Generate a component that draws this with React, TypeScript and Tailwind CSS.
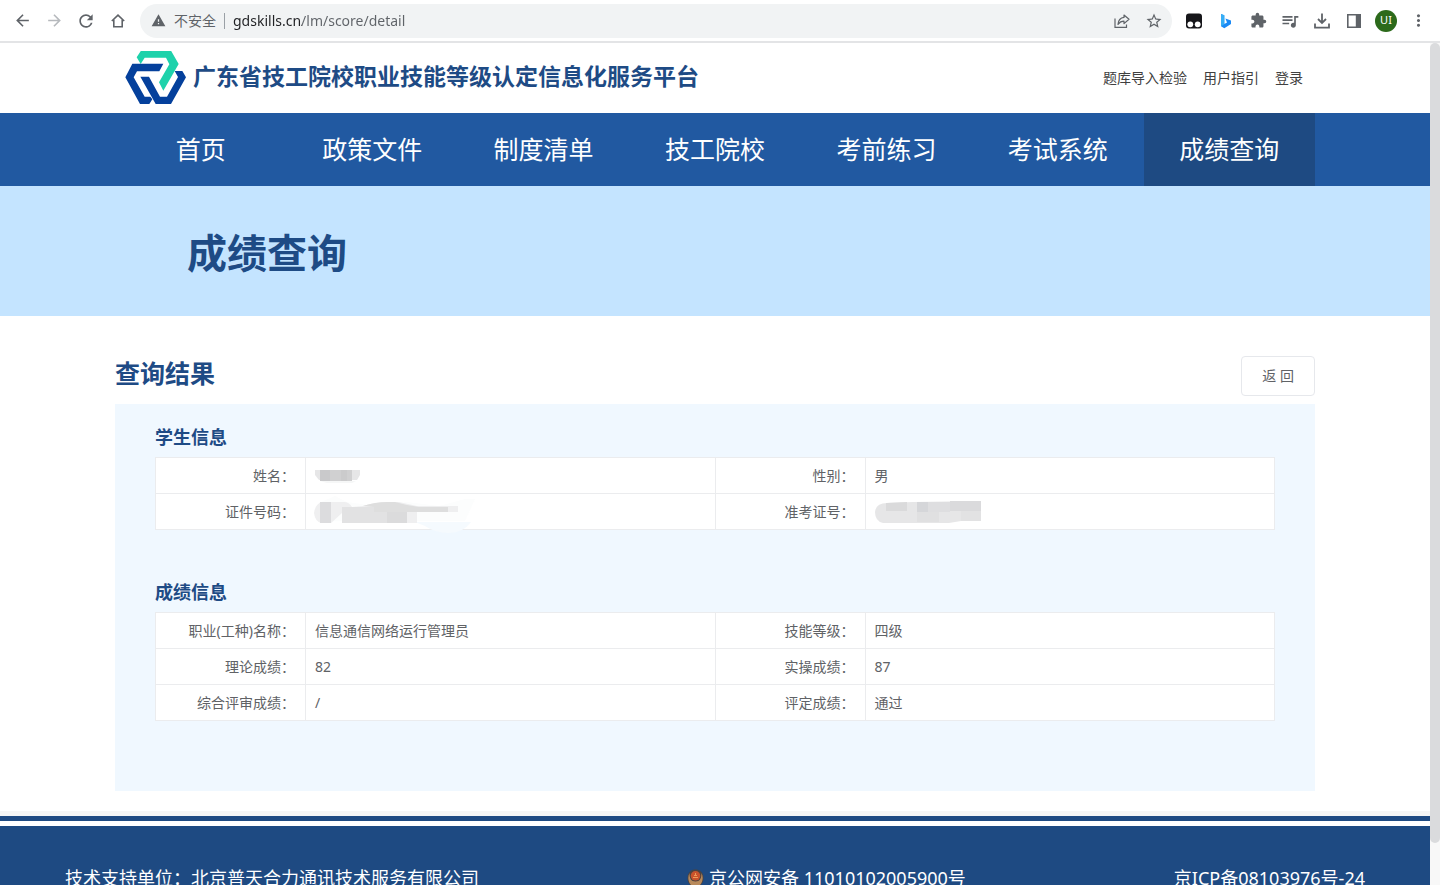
import type { ReactNode } from "react"
import {
  MdArrowBack,
  MdArrowForward,
  MdExtension,
  MdMoreVert,
  MdQueueMusic,
  MdRefresh,
  MdStarBorder,
  MdWarning,
} from "react-icons/md"

const navItems = ["首页", "政策文件", "制度清单", "技工院校", "考前练习", "考试系统", "成绩查询"]

type Row = [string, ReactNode, string, ReactNode]

const studentRows: Row[] = [
  ["姓名：", <MaskedName key="name" />, "性别：", "男"],
  ["证件号码：", <MaskedId key="id" />, "准考证号：", <MaskedTicket key="ticket" />],
]

const scoreRows: Row[] = [
  ["职业(工种)名称：", "信息通信网络运行管理员", "技能等级：", "四级"],
  ["理论成绩：", "82", "实操成绩：", "87"],
  ["综合评审成绩：", "/", "评定成绩：", "通过"],
]

// Mosaic blocks that cover the private values
function MaskedName() {
  return (
    <svg width="48" height="18" viewBox="0 0 48 18" className="block" aria-label="已隐藏">
      <path d="M0 3h45v5l-3 5H4l-4-5z" fill="#e6e6e7" />
      <path d="M5 3h10v11H5z" fill="#c9c9cb" />
      <path d="M15 3h22v11H15z" fill="#d0d0d1" />
      <path d="M26 3h6v11h-6z" fill="#cbcbcc" />
      <path d="M5 14h36l-4 2H12z" fill="#f6f7f7" />
    </svg>
  )
}

function MaskedId() {
  return (
    <svg width="160" height="38" viewBox="0 0 160 38" className="-my-2 block overflow-visible" aria-label="已隐藏">
      <path d="M-1 20Q0 12 6 9L20 3L32 9L60 13L92 9L124 13L150 6H160L150 28H30Q2 30 -1 20Z" fill="#fcfdfd" />
      <path d="M100 29H156Q148 40 134 40Q120 40 110 33Z" fill="#f5fafe" />
      <path d="M-1 20Q0 12 6 9H29Q34 9 37 14L48 13Q60 9 76 9H84L102 13H143V19H102V30H27V20L16 30H6Q0 28 -1 20Z" fill="#efeff0" />
      <path d="M5 9H16V30H5Z" fill="#dcdcde" />
      <path d="M27 14H59V30H27Z" fill="#e2e2e3" />
      <path d="M48 13Q60 9 72 9H80L92 12L104 14H133V19H59V14Z" fill="#dedede" />
      <path d="M59 19H92V30H59Z" fill="#e2e2e3" />
      <path d="M72 19H92V30H72Z" fill="#dbdbdc" />
    </svg>
  )
}

function MaskedTicket() {
  return (
    <svg width="112" height="24" viewBox="0 0 112 24" className="block" aria-label="已隐藏">
      <path d="M0 12q1-9 12-9l26-1 68-1v20H86l-12 2H8q-8-2-8-11z" fill="#e6e6e7" />
      <path d="M11 3l21-1v9H11z" fill="#dadadb" />
      <path d="M42 2h11v10H42z" fill="#d5d6d9" />
      <path d="M53 2h22v10H53z" fill="#dedee0" />
      <path d="M75 1h31v10H75z" fill="#dadadc" />
      <path d="M42 12h22v10H42z" fill="#e0e0e1" />
      <path d="M86 11h20v10H86z" fill="#e2e2e3" />
    </svg>
  )
}

function Logo() {
  return (
    <svg width="62" height="54" viewBox="45 28 186 162" aria-hidden="true">
      <path d="M93 27H183L206 67L160 147L147 122L178 68L168 48H104L92 67L80 47Z" fill="#1ed2ab" />
      <path d="M67 66H160L148 89H81L71 107L104 165H121L127 173L118 187H90L46 107Z" fill="#04409c" />
      <path d="M91 105H117L150 165H171L204 106L194 88H217L228 107L183 187H137Z" fill="#04409c" />
    </svg>
  )
}

function ToolButton({ label, children }: { label: string; children: ReactNode }) {
  return (
    <button type="button" aria-label={label} className="flex h-8 w-8 shrink-0 items-center justify-center">
      {children}
    </button>
  )
}

function BrowserBar() {
  return (
    <div className="flex h-[43px] shrink-0 items-center border-b-2 border-[#e3e4e6] bg-white px-[6px] text-[#5f6368]">
      <ToolButton label="后退">
        <MdArrowBack size={19} />
      </ToolButton>
      <ToolButton label="前进">
        <MdArrowForward size={19} className="text-[#b6b9bd]" />
      </ToolButton>
      <ToolButton label="重新加载">
        <MdRefresh size={20} />
      </ToolButton>
      <ToolButton label="主页">
        <svg width="16" height="16" viewBox="0 0 16 16" fill="none" stroke="currentColor" strokeWidth="1.6">
          <path d="M1.8 8L8 2.2L14.2 8M3.8 6.8V13.7H12.2V6.8" />
        </svg>
      </ToolButton>
      <div className="mx-[6px] flex h-[34px] min-w-0 flex-1 items-center rounded-full bg-[#f1f3f4] pr-[2px] pl-[11px]">
        <MdWarning size={15} className="shrink-0" />
        <span className="ml-2 shrink-0 text-sm">不安全</span>
        <span className="mx-2 h-4 w-px shrink-0 bg-[#9aa0a6]" />
        <input
          type="text"
          aria-label="地址栏"
          defaultValue="gdskills.cn/lm/score/detail"
          className="min-w-0 flex-1 bg-[linear-gradient(to_right,#202124_69px,#5f6368_69px)] bg-clip-text text-sm text-transparent outline-none"
        />
        <ToolButton label="分享">
          <svg width="16" height="16" viewBox="0 0 16 16" fill="none" stroke="currentColor" strokeWidth="1.2">
            <path d="M1 5.5V14.4H12.5V11.5" />
            <path
              d="M10 2L15 6.3L10 10.6V8.2C7.4 8.2 5.6 9.2 4 11.4C4.3 7.5 6.5 4.8 10 4.4Z"
              strokeLinejoin="round"
            />
          </svg>
        </ToolButton>
        <ToolButton label="收藏">
          <MdStarBorder size={18} />
        </ToolButton>
      </div>
      <ToolButton label="Tampermonkey">
        <svg width="16" height="16" viewBox="0 0 16 16">
          <rect width="16" height="15" y="0.5" rx="3" fill="#16161a" />
          <circle cx="4.3" cy="11.3" r="2.9" fill="#fff" />
          <circle cx="11.7" cy="11.3" r="2.9" fill="#fff" />
        </svg>
      </ToolButton>
      <ToolButton label="Bing">
        <svg width="12" height="16" viewBox="0 0 12 16">
          <path d="M1 1L4.3 2.2V11L7 9.4L5.4 5.4L11 7.6V11L4.3 15.2L1 13.3Z" fill="#1b8af5" />
          <path d="M1 1L4.3 2.2V11.3L1 13.3Z" fill="#36aef5" />
        </svg>
      </ToolButton>
      <ToolButton label="扩展程序">
        <MdExtension size={17} />
      </ToolButton>
      <ToolButton label="媒体控制">
        <MdQueueMusic size={20} />
      </ToolButton>
      <ToolButton label="下载">
        <svg width="16" height="16" viewBox="0 0 16 16" fill="none" stroke="currentColor" strokeWidth="1.8">
          <path d="M8 0.5V9.8M4 6L8 10L12 6M1 10.5V14.6H15V10.5" />
        </svg>
      </ToolButton>
      <ToolButton label="侧边栏">
        <svg width="14" height="14" viewBox="0 0 14 14" fill="currentColor">
          <path d="M0 0H14V14H0ZM1.6 1.6V12.4H8.8V1.6Z" fillRule="evenodd" />
        </svg>
      </ToolButton>
      <ToolButton label="用户">
        <span className="flex h-[22px] w-[22px] items-center justify-center rounded-full bg-[#2c6a1b] text-[11px] text-white">
          UI
        </span>
      </ToolButton>
      <ToolButton label="更多">
        <MdMoreVert size={19} />
      </ToolButton>
    </div>
  )
}

function InfoTable({ title, rows }: { title: string; rows: Row[] }) {
  return (
    <section>
      <h3 className="mb-2 text-lg leading-6 font-bold text-[#1e4b85]">{title}</h3>
      <table className="w-full table-fixed border-collapse bg-white text-sm leading-5 text-[#606266]">
        <colgroup>
          <col className="w-[150px]" />
          <col />
          <col className="w-[150px]" />
          <col />
        </colgroup>
        <tbody>
          {rows.map(([labelA, valueA, labelB, valueB]) => (
            <tr key={labelA} className="h-9">
              <th scope="row" className="border border-[#ebecee] pr-[10px] text-right font-normal">
                {labelA}
              </th>
              <td className="border border-[#ebecee] px-[9px]">{valueA}</td>
              <th scope="row" className="border border-[#ebecee] pr-[10px] text-right font-normal">
                {labelB}
              </th>
              <td className="border border-[#ebecee] px-[9px]">{valueB}</td>
            </tr>
          ))}
        </tbody>
      </table>
    </section>
  )
}

function PoliceBadge() {
  return (
    <svg width="17" height="18" viewBox="0 0 17 18" aria-hidden="true">
      <path
        d="M8.5 0.5C12 0.5 16.5 3 16.5 9S13 17.5 8.5 17.5S0.5 15 0.5 9S5 0.5 8.5 0.5Z"
        fill="#4b4340"
      />
      <path
        d="M2.5 4C0.5 8 1 13 4.5 16.5H12.5C16 13 16.5 8 14.5 4C14.5 9 13 12.5 8.5 12.5S2.5 9 2.5 4Z"
        fill="#b98a5b"
      />
      <circle cx="8.5" cy="6.8" r="4.8" fill="#c9532c" />
      <path d="M6 8.5H11M7 6.5H10M8.5 4V6" stroke="#f0a35c" strokeWidth="0.9" />
    </svg>
  )
}

export default function App() {
  return (
    <div className="flex h-screen flex-col overflow-hidden bg-white font-['Noto_Sans','Noto_Sans_CJK_SC',sans-serif]">
      <BrowserBar />
      <div className="flex min-h-0 flex-1">
        <div className="min-w-0 flex-1 overflow-y-auto [scrollbar-width:none]">
          <header className="mx-auto flex h-[70px] max-w-[1200px] items-center justify-between pr-3 pl-[10px]">
            <a href="#" className="flex items-center gap-[6px]">
              <Logo />
              <span className="pb-1 text-[23px] leading-8 font-bold text-[#1e4b85]">
                广东省技工院校职业技能等级认定信息化服务平台
              </span>
            </a>
            <div className="flex gap-4 text-sm text-[#404040]">
              <a href="#">题库导入检验</a>
              <a href="#">用户指引</a>
              <a href="#">登录</a>
            </div>
          </header>

          <nav className="bg-[#2159a1]">
            <div className="mx-auto grid max-w-[1200px] grid-cols-7">
              {navItems.map((item) => (
                <a
                  key={item}
                  href="#"
                  aria-current={item === "成绩查询" ? "page" : undefined}
                  className="flex h-[73px] items-center justify-center pt-px text-[25px] text-white aria-[current=page]:bg-[#1e4a82]"
                >
                  {item}
                </a>
              ))}
            </div>
          </nav>

          <div className="bg-[#c4e4ff]">
            <div className="mx-auto flex h-[130px] max-w-[1200px] items-center px-[72px] pt-[3px]">
              <h1 className="text-[40px] font-bold text-[#1e4b85]">成绩查询</h1>
            </div>
          </div>

          <main className="mx-auto max-w-[1200px] pt-10 pb-5">
            <div className="mb-2 flex items-start justify-between">
              <h2 className="text-[25px] leading-[34px] font-bold text-[#1e4b85]">查询结果</h2>
              <button
                type="button"
                className="h-10 rounded border border-[#e6e8ec] bg-white px-5 text-sm text-[#606266]"
              >
                返 回
              </button>
            </div>
            <div className="flex flex-col gap-[50px] bg-[#f0f8ff] px-10 pt-[21px] pb-[70px]">
              <InfoTable title="学生信息" rows={studentRows} />
              <InfoTable title="成绩信息" rows={scoreRows} />
            </div>
          </main>

          <footer className="border-t-5 border-[#f5f5f5] text-lg leading-6 text-white">
            <div className="mb-[5px] h-[5px] bg-[#1e4a82]" />
            <div className="flex justify-between bg-[#1e4a82] px-[65px] pt-10 pb-8">
              <span>技术支持单位：北京普天合力通讯技术服务有限公司</span>
              <a href="#" className="flex items-center gap-[5px]">
                <PoliceBadge />
                京公网安备 11010102005900号
              </a>
              <a href="#">京ICP备08103976号-24</a>
            </div>
          </footer>
        </div>
        <div className="w-[10px] shrink-0 bg-[#f8f8f8]">
          <div className="h-[95%] rounded-full bg-[#dadbdd]" />
        </div>
      </div>
    </div>
  )
}
